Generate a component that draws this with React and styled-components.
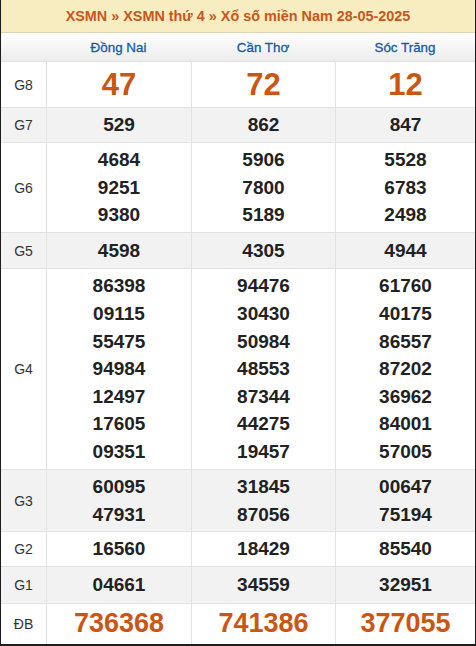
import React from "react";
import styled, { createGlobalStyle } from "styled-components";

const Global = createGlobalStyle`
  html, body { margin: 0; padding: 0; background: #fff; }
  body { font-family: "Liberation Sans", Arial, sans-serif; }
`;

const Board = styled.div`
  width: 476px;
  box-sizing: border-box;
  border-left: 1px solid #1c1c1c;
  border-right: 1px solid #1c1c1c;
  border-bottom: 2px solid #1c1c1c;
  font-family: "Liberation Sans", Arial, sans-serif;
`;

const Title = styled.div`
  height: 33px;
  box-sizing: border-box;
  background: #f8ecc1;
  border-bottom: 1px solid #ddd3b8;
  display: flex;
  align-items: center;
  justify-content: center;
  color: #c9561b;
  font-weight: bold;
  font-size: 14.4px;
`;

const cols = "45px 145px 144px 1fr";

const HeadRow = styled.div`
  display: grid;
  grid-template-columns: ${cols};
  height: 29px;
  box-sizing: border-box;
  background: linear-gradient(#ffffff, #ececec);
  border-bottom: 1px solid #e2e2e2;
`;

const Province = styled.div`
  display: flex;
  align-items: center;
  justify-content: center;
  color: #1659a6;
  font-size: 13.4px;
  -webkit-text-stroke: 0.3px #1659a6;
`;

const Row = styled.div`
  display: grid;
  grid-template-columns: ${cols};
  background: ${(p) => (p.$alt ? "#f2f2f2" : "#ffffff")};
  border-bottom: ${(p) => (p.$last ? "none" : "1px solid #e2e2e2")};
  height: ${(p) => p.$h}px;
  box-sizing: border-box;
`;

const Label = styled.div`
  display: flex;
  align-items: center;
  justify-content: center;
  font-size: 14px;
  color: #333;
`;

const Cell = styled.div`
  border-left: 1px solid #e2e2e2;
  display: flex;
  flex-direction: column;
  align-items: center;
  justify-content: center;
`;

const Num = styled.div`
  font-weight: bold;
  font-size: ${(p) => p.$size}px;
  line-height: 27.6px;
  color: ${(p) => (p.$hot ? "#cc5512" : "#222222")};
`;

const provinces = ["Đồng Nai", "Cần Thơ", "Sóc Trăng"];

const rows = [
  { label: "G8", h: 46, size: 31, hot: true, data: [["47"], ["72"], ["12"]] },
  { label: "G7", h: 35, data: [["529"], ["862"], ["847"]] },
  {
    label: "G6",
    h: 90,
    data: [
      ["4684", "9251", "9380"],
      ["5906", "7800", "5189"],
      ["5528", "6783", "2498"],
    ],
  },
  { label: "G5", h: 36, data: [["4598"], ["4305"], ["4944"]] },
  {
    label: "G4",
    h: 201,
    data: [
      ["86398", "09115", "55475", "94984", "12497", "17605", "09351"],
      ["94476", "30430", "50984", "48553", "87344", "44275", "19457"],
      ["61760", "40175", "86557", "87202", "36962", "84001", "57005"],
    ],
  },
  {
    label: "G3",
    h: 62,
    data: [
      ["60095", "47931"],
      ["31845", "87056"],
      ["00647", "75194"],
    ],
  },
  { label: "G2", h: 35, data: [["16560"], ["18429"], ["85540"]] },
  { label: "G1", h: 37, data: [["04661"], ["34559"], ["32951"]] },
  { label: "ĐB", h: 40, size: 27, hot: true, data: [["736368"], ["741386"], ["377055"]] },
];

export default function App() {
  return (
    <>
      <Global />
      <Board>
        <Title>XSMN » XSMN thứ 4 » Xổ số miền Nam 28-05-2025</Title>
        <HeadRow>
          <div />
          {provinces.map((p) => (
            <Province key={p}>{p}</Province>
          ))}
        </HeadRow>
        {rows.map((r, i) => (
          <Row key={r.label} $alt={i % 2 === 1} $h={r.h} $last={i === rows.length - 1}>
            <Label>{r.label}</Label>
            {r.data.map((col, j) => (
              <Cell key={j}>
                {col.map((n) => (
                  <Num key={n} $size={r.size || 19} $hot={r.hot}>
                    {n}
                  </Num>
                ))}
              </Cell>
            ))}
          </Row>
        ))}
      </Board>
    </>
  );
}
